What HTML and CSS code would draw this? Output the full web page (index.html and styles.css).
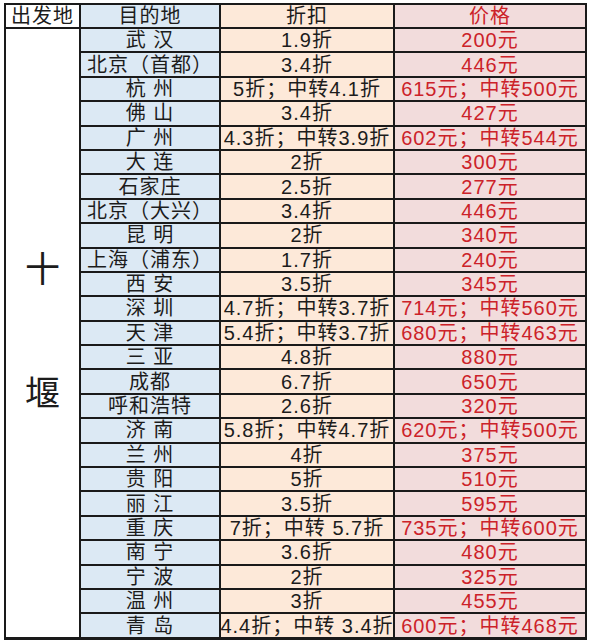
FILE: index.html
```html
<!DOCTYPE html>
<html lang="zh-CN">
<head>
<meta charset="utf-8">
<title>十堰出发航线折扣</title>
<link rel="stylesheet" href="styles.css">
</head>
<body>
<div class="sheet">
  <div class="cell h-origin">出发地</div>
  <div class="cell dest">目的地</div>
  <div class="cell disc">折扣</div>
  <div class="cell price">价格</div>
  <div class="cell origin"><span>十</span><span>堰</span></div>

  <div class="cell dest">武 汉</div><div class="cell disc">1.9折</div><div class="cell price">200元</div>
  <div class="cell dest">北京（首都）</div><div class="cell disc">3.4折</div><div class="cell price">446元</div>
  <div class="cell dest">杭 州</div><div class="cell disc">5折；中转4.1折</div><div class="cell price">615元；中转500元</div>
  <div class="cell dest">佛 山</div><div class="cell disc">3.4折</div><div class="cell price">427元</div>
  <div class="cell dest">广 州</div><div class="cell disc">4.3折；中转3.9折</div><div class="cell price">602元；中转544元</div>
  <div class="cell dest">大 连</div><div class="cell disc">2折</div><div class="cell price">300元</div>
  <div class="cell dest">石家庄</div><div class="cell disc">2.5折</div><div class="cell price">277元</div>
  <div class="cell dest">北京（大兴）</div><div class="cell disc">3.4折</div><div class="cell price">446元</div>
  <div class="cell dest">昆 明</div><div class="cell disc">2折</div><div class="cell price">340元</div>
  <div class="cell dest">上海（浦东）</div><div class="cell disc">1.7折</div><div class="cell price">240元</div>
  <div class="cell dest">西 安</div><div class="cell disc">3.5折</div><div class="cell price">345元</div>
  <div class="cell dest">深 圳</div><div class="cell disc">4.7折；中转3.7折</div><div class="cell price">714元；中转560元</div>
  <div class="cell dest">天 津</div><div class="cell disc">5.4折；中转3.7折</div><div class="cell price">680元；中转463元</div>
  <div class="cell dest">三 亚</div><div class="cell disc">4.8折</div><div class="cell price">880元</div>
  <div class="cell dest">成都</div><div class="cell disc">6.7折</div><div class="cell price">650元</div>
  <div class="cell dest">呼和浩特</div><div class="cell disc">2.6折</div><div class="cell price">320元</div>
  <div class="cell dest">济 南</div><div class="cell disc">5.8折；中转4.7折</div><div class="cell price">620元；中转500元</div>
  <div class="cell dest">兰 州</div><div class="cell disc">4折</div><div class="cell price">375元</div>
  <div class="cell dest">贵 阳</div><div class="cell disc">5折</div><div class="cell price">510元</div>
  <div class="cell dest">丽 江</div><div class="cell disc">3.5折</div><div class="cell price">595元</div>
  <div class="cell dest">重 庆</div><div class="cell disc">7折；中转 5.7折</div><div class="cell price">735元；中转600元</div>
  <div class="cell dest">南 宁</div><div class="cell disc">3.6折</div><div class="cell price">480元</div>
  <div class="cell dest">宁 波</div><div class="cell disc">2折</div><div class="cell price">325元</div>
  <div class="cell dest">温 州</div><div class="cell disc">3折</div><div class="cell price">455元</div>
  <div class="cell dest">青 岛</div><div class="cell disc">4.4折；中转 3.4折</div><div class="cell price">600元；中转468元</div>
</div>
</body>
</html>
```

FILE: styles.css
```css
html, body {
  margin: 0;
  padding: 0;
  background: #ffffff;
}

body {
  font-family: "Liberation Sans", "Noto Sans CJK SC", sans-serif;
  color: #1c1c1c;
}

.sheet {
  margin: 3px 0 0 4px;
  width: 583px;
  box-sizing: border-box;
  display: grid;
  grid-template-columns: 73px 138px 172px 190px;
  grid-template-rows: 22px repeat(25, 22.4px);
  gap: 2px;
  padding: 2px 2px 3px 2px;
  background: #1a1a1a;
}

.cell {
  display: flex;
  align-items: center;
  justify-content: center;
  font-size: 20px;
  line-height: 22px;
  letter-spacing: 1px;
  white-space: nowrap;
  overflow: hidden;
}

.h-origin {
  background: #ffffff;
}

.origin {
  grid-column: 1;
  grid-row: 2 / span 25;
  background: #ffffff;
  flex-direction: column;
  gap: 88px;
  font-size: 35px;
  line-height: 36px;
  letter-spacing: 0;
  padding-bottom: 2px;
}

.dest {
  background: #dce9f4;
}

.disc {
  background: #fde9d9;
}

.price {
  background: #f2dcdc;
  color: #cc2229;
}
```
